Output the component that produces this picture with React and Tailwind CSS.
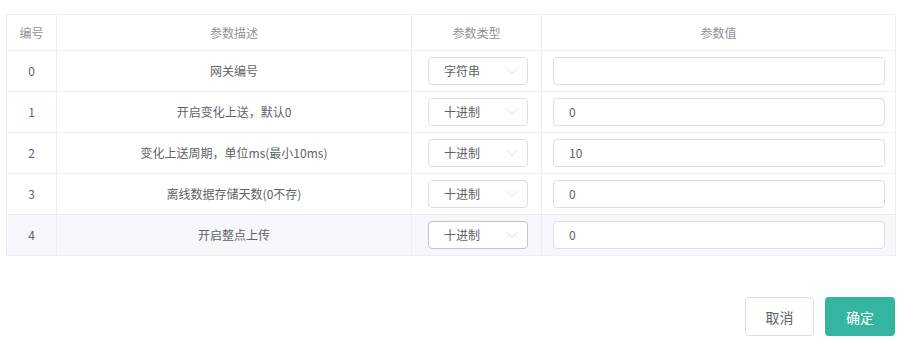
import React from 'react';
import { ChevronDown } from 'lucide-react';

const params = [
  { id: 0, desc: '网关编号', type: '字符串', value: '' },
  { id: 1, desc: '开启变化上送，默认0', type: '十进制', value: '0' },
  { id: 2, desc: '变化上送周期，单位ms(最小10ms)', type: '十进制', value: '10' },
  { id: 3, desc: '离线数据存储天数(0不存)', type: '十进制', value: '0' },
  { id: 4, desc: '开启整点上传', type: '十进制', value: '0', hover: true },
];

const TypeSelect = ({ label, hover }) => (
  <div
    className={`flex items-center justify-between h-7 w-[100px] rounded border bg-white pl-[15px] pr-[5px] text-xs text-[#606266] ${
      hover ? 'border-[#c0c4cc]' : 'border-[#dcdfe6]'
    }`}
  >
    <span>{label}</span>
    <ChevronDown size={20} strokeWidth={0.8} className="text-[#c0c4cc]" />
  </div>
);

const App = () => {
  return (
    <div
      className="w-[920px] h-[344px] bg-white px-[6px] pt-[14px]"
      style={{ fontFamily: '"Noto Sans CJK SC", "Noto Sans", sans-serif' }}
    >
      <table className="w-[889px] border-collapse table-fixed text-xs">
        <colgroup>
          <col className="w-[50px]" />
          <col className="w-[355px]" />
          <col className="w-[130px]" />
          <col className="w-[354px]" />
        </colgroup>
        <thead>
          <tr className="h-[36px] text-[#909399]">
            <th className="border border-[#ebeef5] font-normal">编号</th>
            <th className="border border-[#ebeef5] font-normal">参数描述</th>
            <th className="border border-[#ebeef5] font-normal">参数类型</th>
            <th className="border border-[#ebeef5] font-normal">参数值</th>
          </tr>
        </thead>
        <tbody>
          {params.map((p) => (
            <tr key={p.id} className={`h-[41px] text-[#606266] ${p.hover ? 'bg-[#f5f7fa]' : ''}`}>
              <td className="border border-[#ebeef5] text-center">{p.id}</td>
              <td className="border border-[#ebeef5] text-center">{p.desc}</td>
              <td className="border border-[#ebeef5] pl-[16px]">
                <TypeSelect label={p.type} hover={p.hover} />
              </td>
              <td className="border border-[#ebeef5] pl-[11px] pr-[10px]">
                <div className="flex items-center h-7 w-full rounded border border-[#dcdfe6] bg-white px-[15px] text-xs text-[#606266]">
                  {p.value}
                </div>
              </td>
            </tr>
          ))}
        </tbody>
      </table>

      <div className="flex justify-end gap-[11px] mt-[41px] w-[889px]">
        <button className="h-[39px] w-[69px] rounded border border-[#dcdfe6] bg-white text-sm text-[#606266]">
          取消
        </button>
        <button className="h-[39px] w-[70px] rounded bg-[#35b5a1] text-sm text-white">
          确定
        </button>
      </div>
    </div>
  );
};

export default App;
